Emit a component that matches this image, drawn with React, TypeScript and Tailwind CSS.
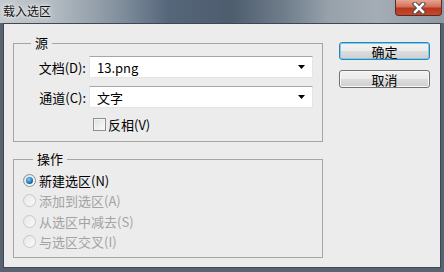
import type { ReactNode } from 'react';

function Select({ value }: { value: string }) {
  return (
    <div className="w-[224px] h-[22px] bg-white border border-[#e2e6ea] border-t-[#a6a6a6] flex items-center pl-[7px] pr-[7px]">
      <span className="flex-1 leading-[15px]">{value}</span>
      <svg width="7" height="4" viewBox="0 0 7 4">
        <path d="M0 0H7L3.5 4Z" fill="#000" />
      </svg>
    </div>
  );
}

function Radio({ checked, disabled, children }: { checked?: boolean; disabled?: boolean; children: ReactNode }) {
  return (
    <div className="h-[20.5px] flex items-center pl-[9px]">
      <span
        className={`w-[13px] h-[13px] rounded-full border flex items-center justify-center ${
          disabled
            ? 'border-[#c9c9c9] bg-[linear-gradient(to_bottom_right,#e6e6e6,#fafafa)]'
            : 'border-[#8c8f94] bg-[linear-gradient(to_bottom_right,#dcdcdc,#ffffff)]'
        }`}
      >
        {checked && (
          <span className="w-[7px] h-[7px] rounded-full bg-[radial-gradient(circle_at_40%_35%,#7fd0ff,#1a6fb5_60%,#0d3f78)]" />
        )}
      </span>
      <span className={`ml-[3px] leading-[15px] ${disabled ? 'text-[#a3a3a3]' : 'text-black'}`}>{children}</span>
    </div>
  );
}

function Button({ label, primary }: { label: string; primary?: boolean }) {
  return (
    <button
      className={`w-[91px] h-[18px] rounded-[3px] border flex items-center justify-center leading-[15px] bg-[linear-gradient(to_bottom,#f3f3f3_0%,#ebebeb_50%,#dddddd_51%,#cfcfcf_100%)] ${
        primary ? 'border-[#3c7fb1] shadow-[inset_0_0_0_1px_#6fd0f5]' : 'border-[#707070] shadow-[inset_0_0_0_1px_#fbfbfb]'
      }`}
    >
      {label}
    </button>
  );
}

export default function App() {
  return (
    <div
      className="w-[444px] h-[272px] flex flex-col bg-[#59636f] text-[13px] text-black overflow-hidden"
      style={{ fontFamily: '"Noto Sans CJK SC", "Noto Sans", sans-serif' }}
    >
      {/* title bar */}
      <div className="h-[23px] flex items-start text-[12px] bg-[linear-gradient(to_right,#c4cace_0%,#b3bbc1_12%,#8593a0_26%,#56667a_38%,#4e5d6e_52%,#6f7d8b_64%,#97a1aa_74%,#a4adb5_85%,#8e99a3_100%)]">
        <span className="pl-[3px] pt-[3px] leading-[16px] text-[#111] [text-shadow:0_0_6px_#ffffff,0_0_3px_#ffffff]">载入选区</span>
        <div className="ml-auto mr-[2px] w-[47px] h-[16px] rounded-b-[4px] border border-t-0 border-[#5a2a22] bg-[linear-gradient(to_bottom,#e8a593_0%,#d2705a_45%,#b8361c_55%,#c7492c_100%)] flex items-center justify-center">
          <svg width="14" height="12" viewBox="0 0 14 12">
            <path d="M3 2L11 10M11 2L3 10" stroke="#4b4b4b" strokeWidth="4.5" strokeLinecap="square" />
            <path d="M3 2L11 10M11 2L3 10" stroke="#ffffff" strokeWidth="2.5" strokeLinecap="square" />
          </svg>
        </div>
      </div>

      {/* client area */}
      <div className="flex-1 mx-[3px] mb-[4px] border border-[#3f4852] bg-[#ececec] flex pl-[9px]">
        <div className="pt-[11px] flex flex-col">
          <fieldset className="w-[310px] h-[107px] border border-[#a5a5a5] px-0 pb-0">
            <legend className="ml-[17px] px-[4px] leading-[16px]">源</legend>
            <div className="mt-[5px] flex items-center">
              <span className="w-[75px] pr-[3px] text-right leading-[15px]">文档(D):</span>
              <Select value="13.png" />
            </div>
            <div className="mt-[8px] flex items-center">
              <span className="w-[75px] pr-[3px] text-right leading-[15px]">通道(C):</span>
              <Select value="文字" />
            </div>
            <div className="mt-[9px] ml-[79px] flex items-center">
              <span className="w-[13px] h-[13px] border border-[#8e8f8f] bg-[linear-gradient(to_bottom_right,#dedede,#fbfbfb)] shadow-[inset_0_0_0_1px_#f4f4f4]" />
              <span className="ml-[2px] leading-[15px]">反相(V)</span>
            </div>
          </fieldset>

          <fieldset className="mt-[9px] w-[310px] h-[107px] border border-[#a5a5a5] px-0 pb-0">
            <legend className="ml-[19px] px-[4px] leading-[16px]">操作</legend>
            <div className="mt-[3px] flex flex-col">
              <Radio checked>新建选区(N)</Radio>
              <Radio disabled>添加到选区(A)</Radio>
              <Radio disabled>从选区中减去(S)</Radio>
              <Radio disabled>与选区交叉(I)</Radio>
            </div>
          </fieldset>
        </div>

        <div className="ml-[16px] mt-[18px] flex flex-col gap-[10px]">
          <Button label="确定" primary />
          <Button label="取消" />
        </div>
      </div>
    </div>
  );
}
